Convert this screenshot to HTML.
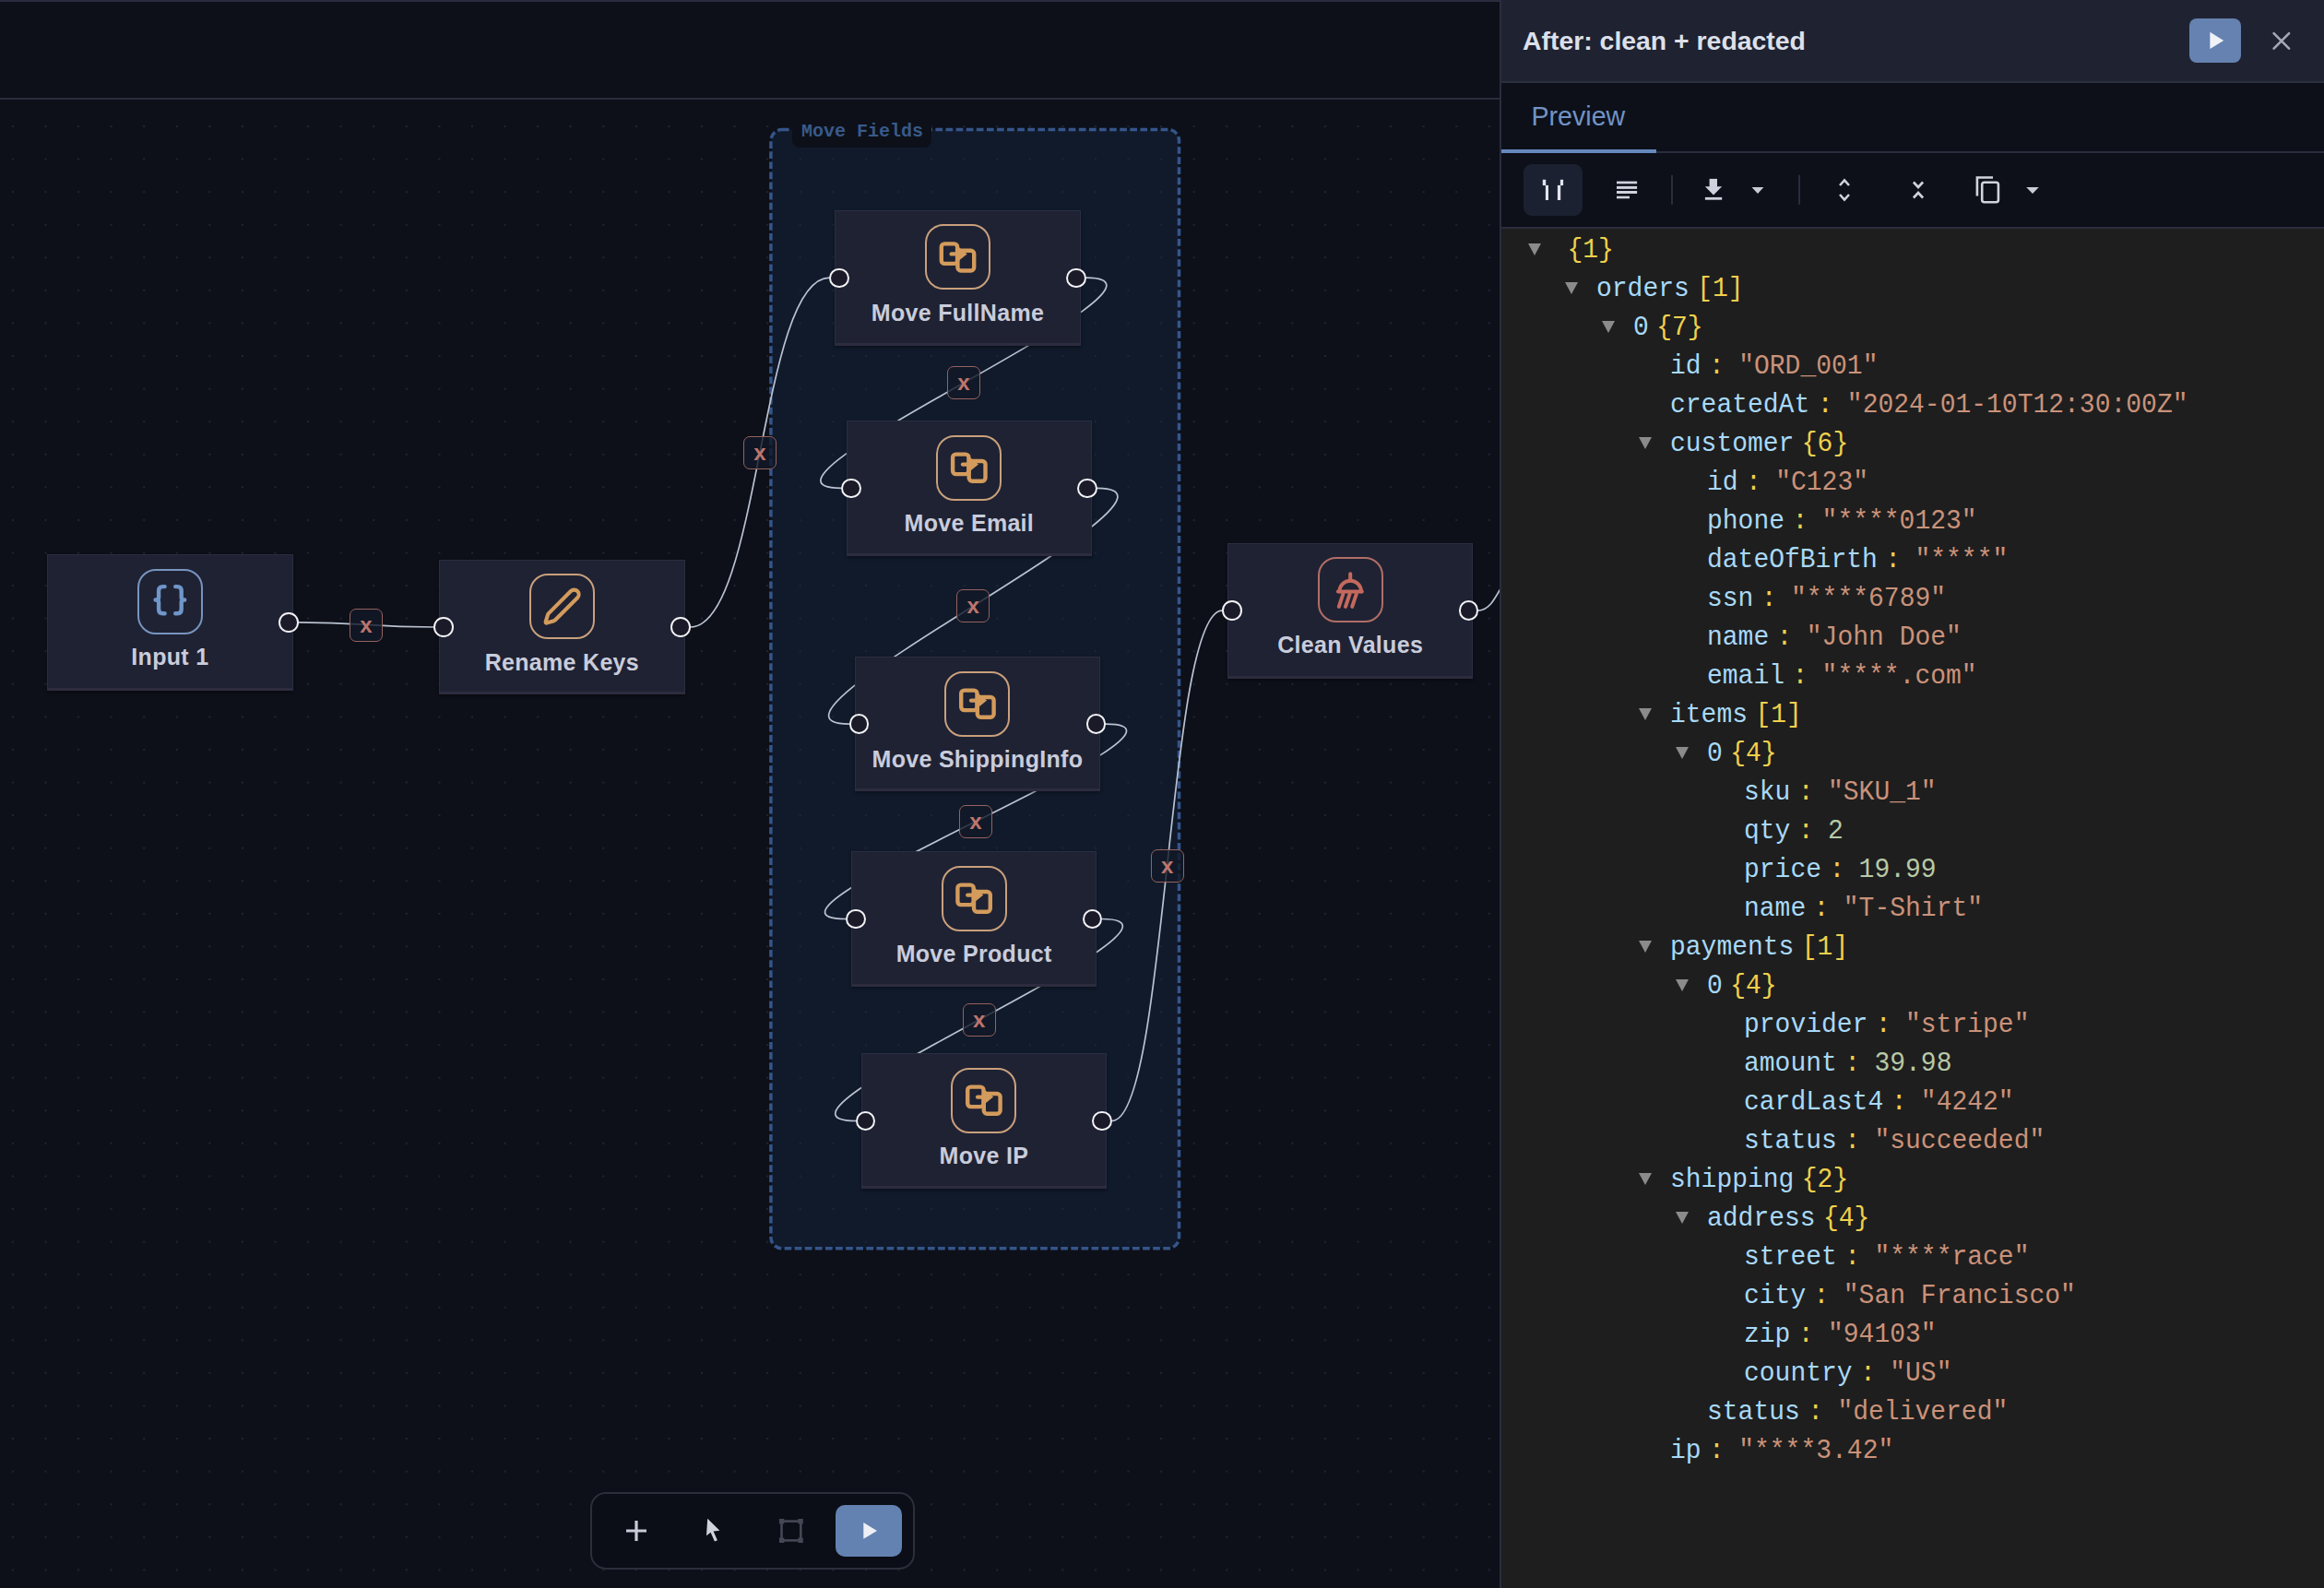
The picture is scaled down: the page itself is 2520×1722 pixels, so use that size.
<!DOCTYPE html>
<html><head><meta charset="utf-8"><style>
*{box-sizing:border-box}
html,body{margin:0;padding:0;width:2520px;height:1722px;overflow:hidden;background:#0d1019;font-family:"Liberation Sans",sans-serif}
.abs{position:absolute}
.node{position:absolute;background:#1f2233;border:1.5px solid #2a2e40;border-bottom:3px solid #2d2c3f;box-shadow:0 2px 3px rgba(0,0,0,0.35)}
.ibox{position:absolute;width:71px;height:71px;border:2px solid;border-radius:20px}
.nlabel{position:absolute;left:0;right:0;text-align:center;font-weight:bold;font-size:25px;letter-spacing:0.3px;color:#c9ccdb;white-space:nowrap;line-height:30px}
.handle{position:absolute;width:21.5px;height:21.5px;border-radius:50%;background:#1b1a29;border:2.4px solid #f2f2f5}
.elab{position:absolute;width:36px;height:36px;border:1.9px solid #95625f;border-radius:7px;background:rgba(17,24,39,0.8);color:#bd756d;font-weight:bold;font-size:24px;line-height:33.5px;text-align:center}
.row{position:absolute;height:42px;line-height:42px;font-family:"Liberation Mono",monospace;font-size:28px;white-space:pre;transform:scaleY(1.04);transform-origin:0 28px}
.k{color:#a8d9f8}
.c{color:#f0d04c;margin:0 15.4px 0 8.4px}
.s{color:#ca927a}
.n{color:#b7c9a6}
.b{color:#f0d04c;margin-left:8.4px}
.tri{position:absolute;width:0;height:0;border-left:7.1px solid transparent;border-right:7.1px solid transparent;border-top:13.7px solid #8b8b8b}
</style></head><body>

<div class="abs" style="left:0;top:0;width:1626px;height:2px;background:#2a2d3d"></div>
<div class="abs" style="left:0;top:106px;width:1626px;height:2px;background:#2a2d3d"></div>
<svg class="abs" style="left:0;top:0" width="1626" height="1722" viewBox="0 0 1626 1722">
<defs><pattern id="dots" patternUnits="userSpaceOnUse" x="-3.888" y="119.212" width="35.576" height="35.576"><circle cx="17.788" cy="17.788" r="1.1" fill="#252935"/></pattern></defs>
<rect x="0" y="108" width="1626" height="1614" fill="url(#dots)"/>
<rect x="835.9" y="140.5" width="442.6" height="1213.2" rx="12" ry="12" fill="rgba(22,40,70,0.42)" stroke="#35558a" stroke-width="3.5" stroke-dasharray="7.7 3.4"/>
<path d="M323.4,674.9 C396.9,674.9 396.9,680.0 470.4,680.0" fill="none" stroke="#bac2d1" stroke-width="1.7"/>
<path d="M748.5,680.0 C824.0,680.0 824.0,301.2 899.4,301.2" fill="none" stroke="#bac2d1" stroke-width="1.7"/>
<path d="M1177.6,301.2 C1313.4,301.2 776.3,529.3 912.1,529.3" fill="none" stroke="#bac2d1" stroke-width="1.7"/>
<path d="M1189.6,529.3 C1326.2,529.3 784.3,785.1 920.9,785.1" fill="none" stroke="#bac2d1" stroke-width="1.7"/>
<path d="M1198.9,785.1 C1338.8,785.1 777.2,996.5 917.1,996.5" fill="none" stroke="#bac2d1" stroke-width="1.7"/>
<path d="M1195.1,996.5 C1331.3,996.5 791.8,1215.5 928.0,1215.5" fill="none" stroke="#bac2d1" stroke-width="1.7"/>
<path d="M1205.8,1215.5 C1265.6,1215.5 1265.6,662.1 1325.3,662.1" fill="none" stroke="#bac2d1" stroke-width="1.7"/>
<path d="M1603.0,662.1 C1614.4,661.6 1620,651.15 1630,633.15" fill="none" stroke="#bac2d1" stroke-width="1.7"/>
</svg>
<div class="abs" style="left:858.6px;top:121px;width:151px;height:39px;background:#0d1019;border-radius:8px"></div>
<div class="abs" style="left:869px;top:128.5px;font:bold 20px 'Liberation Mono',monospace;color:#385a8a;line-height:28px;white-space:pre">Move Fields</div>
<div class="node" style="left:51.2px;top:601.0px;width:266.4px;height:147.8px"></div>
<div class="ibox" style="left:148.9px;top:616.6px;border-color:#7794bf"></div>
<svg class="abs" style="left:0;top:0;overflow:visible" width="1" height="1"><g fill="none" stroke="#6f95c9" stroke-width="4.4" stroke-linecap="round" stroke-linejoin="round" transform="translate(0.0,-0.4)"><path d="M178.6,636.5 L176.6,636.5 Q172.1,636.5 172.1,641 L172.1,648.4 Q172.1,650.9 168.6,650.9 Q172.1,650.9 172.1,653.4 L172.1,661.1 Q172.1,665.6 176.6,665.6 L178.6,665.6"/><path d="M190.2,636.5 L192.2,636.5 Q196.7,636.5 196.7,641 L196.7,648.4 Q196.7,650.9 200.2,650.9 Q196.7,650.9 196.7,653.4 L196.7,661.1 Q196.7,665.6 192.2,665.6 L190.2,665.6"/></g></svg>
<div class="nlabel" style="left:51.2px;width:266.4px;top:696.9px">Input 1</div>
<div class="node" style="left:476.2px;top:606.6px;width:266.4px;height:146.9px"></div>
<div class="ibox" style="left:573.9px;top:622.2px;border-color:#c9a07c"></div>
<svg class="abs" style="left:587.8px;top:636.1px" width="43.2" height="43.2" viewBox="0 0 24 24" fill="none" stroke="#d39b5c" stroke-width="2.3" stroke-linecap="round" stroke-linejoin="round"><path d="M21.174 6.812a1 1 0 0 0-3.986-3.987L3.842 16.174a2 2 0 0 0-.5.83l-1.321 4.352a.5.5 0 0 0 .623.622l4.353-1.32a2 2 0 0 0 .83-.497z"/></svg>
<div class="nlabel" style="left:476.2px;width:266.4px;top:702.5px">Rename Keys</div>
<div class="node" style="left:905.3px;top:227.8px;width:266.4px;height:146.8px"></div>
<div class="ibox" style="left:1003.0px;top:243.4px;border-color:#c9a07c"></div>
<svg class="abs" style="left:0;top:0;overflow:visible" width="1" height="1"><g fill="none" stroke="#d39b5c" stroke-width="4.4" stroke-linejoin="round" stroke-linecap="round"><rect x="1020.8" y="264.4" width="17.3" height="21.5" rx="3.5"/><rect x="1038.4" y="271.8" width="17.8" height="21.7" rx="3.5"/><path d="M1031.7,275.4 L1039.1,275.4"/></g><path d="M1037.6,266.3 L1048.7,275.4 L1037.6,284.3 Z" fill="#d39b5c"/></svg>
<div class="nlabel" style="left:905.3px;width:266.4px;top:323.7px">Move FullName</div>
<div class="node" style="left:918.0px;top:456.0px;width:265.7px;height:146.6px"></div>
<div class="ibox" style="left:1015.3px;top:471.6px;border-color:#c9a07c"></div>
<svg class="abs" style="left:0;top:0;overflow:visible" width="1" height="1"><g fill="none" stroke="#d39b5c" stroke-width="4.4" stroke-linejoin="round" stroke-linecap="round"><rect x="1033.1" y="492.6" width="17.3" height="21.5" rx="3.5"/><rect x="1050.7" y="500.0" width="17.8" height="21.7" rx="3.5"/><path d="M1044.0,503.6 L1051.4,503.6"/></g><path d="M1049.9,494.5 L1061.0,503.6 L1049.9,512.5 Z" fill="#d39b5c"/></svg>
<div class="nlabel" style="left:918.0px;width:265.7px;top:551.9px">Move Email</div>
<div class="node" style="left:926.8px;top:712.0px;width:266.2px;height:146.3px"></div>
<div class="ibox" style="left:1024.4px;top:727.6px;border-color:#c9a07c"></div>
<svg class="abs" style="left:0;top:0;overflow:visible" width="1" height="1"><g fill="none" stroke="#d39b5c" stroke-width="4.4" stroke-linejoin="round" stroke-linecap="round"><rect x="1042.2" y="748.6" width="17.3" height="21.5" rx="3.5"/><rect x="1059.8" y="756.0" width="17.8" height="21.7" rx="3.5"/><path d="M1053.1,759.6 L1060.5,759.6"/></g><path d="M1059.0,750.5 L1070.1,759.6 L1059.0,768.5 Z" fill="#d39b5c"/></svg>
<div class="nlabel" style="left:926.8px;width:266.2px;top:807.9px">Move ShippingInfo</div>
<div class="node" style="left:923.0px;top:923.0px;width:266.2px;height:147.0px"></div>
<div class="ibox" style="left:1020.6px;top:938.6px;border-color:#c9a07c"></div>
<svg class="abs" style="left:0;top:0;overflow:visible" width="1" height="1"><g fill="none" stroke="#d39b5c" stroke-width="4.4" stroke-linejoin="round" stroke-linecap="round"><rect x="1038.4" y="959.6" width="17.3" height="21.5" rx="3.5"/><rect x="1056.0" y="967.0" width="17.8" height="21.7" rx="3.5"/><path d="M1049.3,970.6 L1056.7,970.6"/></g><path d="M1055.2,961.5 L1066.3,970.6 L1055.2,979.5 Z" fill="#d39b5c"/></svg>
<div class="nlabel" style="left:923.0px;width:266.2px;top:1018.9px">Move Product</div>
<div class="node" style="left:933.9px;top:1142.0px;width:266.0px;height:147.0px"></div>
<div class="ibox" style="left:1031.4px;top:1157.6px;border-color:#c9a07c"></div>
<svg class="abs" style="left:0;top:0;overflow:visible" width="1" height="1"><g fill="none" stroke="#d39b5c" stroke-width="4.4" stroke-linejoin="round" stroke-linecap="round"><rect x="1049.2" y="1178.6" width="17.3" height="21.5" rx="3.5"/><rect x="1066.8" y="1186.0" width="17.8" height="21.7" rx="3.5"/><path d="M1060.1,1189.6 L1067.5,1189.6"/></g><path d="M1066.0,1180.5 L1077.1,1189.6 L1066.0,1198.5 Z" fill="#d39b5c"/></svg>
<div class="nlabel" style="left:933.9px;width:266.0px;top:1237.9px">Move IP</div>
<div class="node" style="left:1331.2px;top:588.5px;width:266.0px;height:147.3px"></div>
<div class="ibox" style="left:1428.7px;top:604.1px;border-color:#b06e66"></div>
<svg class="abs" style="left:0;top:0;overflow:visible" width="1" height="1"><g fill="none" stroke="#c4695d" stroke-width="4" stroke-linecap="round" stroke-linejoin="round"><path d="M1464.2,622.3 L1464.2,628.2"/><path d="M1452.4,641.5 A11.8 11.8 0 0 1 1476.0,641.5"/><path d="M1450.9,641.5 L1476.8,641.5"/><path d="M1456.4,644.2 L1451.8,657.9 M1463.6,644.2 L1459.0,657.9 M1470.8,644.2 L1466.2,657.9"/></g></svg>
<div class="nlabel" style="left:1331.2px;width:266.0px;top:684.4px">Clean Values</div>
<div class="handle" style="left:302.1px;top:664.1px"></div>
<div class="handle" style="left:470.2px;top:669.3px"></div>
<div class="handle" style="left:727.1px;top:669.3px"></div>
<div class="handle" style="left:899.3px;top:290.5px"></div>
<div class="handle" style="left:1156.2px;top:290.5px"></div>
<div class="handle" style="left:912.0px;top:518.5px"></div>
<div class="handle" style="left:1168.2px;top:518.5px"></div>
<div class="handle" style="left:920.8px;top:774.4px"></div>
<div class="handle" style="left:1177.5px;top:774.4px"></div>
<div class="handle" style="left:917.0px;top:985.8px"></div>
<div class="handle" style="left:1173.7px;top:985.8px"></div>
<div class="handle" style="left:927.9px;top:1204.8px"></div>
<div class="handle" style="left:1184.4px;top:1204.8px"></div>
<div class="handle" style="left:1325.2px;top:651.4px"></div>
<div class="handle" style="left:1581.7px;top:651.4px"></div>
<div class="elab" style="left:378.9px;top:659.5px">x</div>
<div class="elab" style="left:806.0px;top:472.6px">x</div>
<div class="elab" style="left:1026.9px;top:397.2px">x</div>
<div class="elab" style="left:1037.2px;top:639.2px">x</div>
<div class="elab" style="left:1040.0px;top:872.8px">x</div>
<div class="elab" style="left:1043.6px;top:1088.0px">x</div>
<div class="elab" style="left:1247.6px;top:920.8px">x</div>
<div class="abs" style="left:639.8px;top:1617.8px;width:351.8px;height:84px;border:2.2px solid #2b2e3b;border-radius:17px;background:#0b0e16"></div>
<svg class="abs" style="left:0;top:0;overflow:visible" width="1" height="1"><path d="M690,1649 L690,1671 M679,1660 L701,1660" stroke="#c9cbd6" stroke-width="3.2" stroke-linecap="butt"/><path d="M767.2,1646.7 L780.4,1659.7 L773.6,1660.6 L777.9,1670.3 L774.9,1671.6 L770.6,1661.7 L766,1665.2 Z" fill="#d0d2dc"/><g stroke="#444854" stroke-width="2.6" fill="none"><rect x="847.5" y="1649.6" width="20.8" height="20.8"/></g><g fill="#444854"><rect x="844.9" y="1647" width="5.4" height="5.4"/><rect x="865.4" y="1647" width="5.4" height="5.4"/><rect x="844.9" y="1667.6" width="5.4" height="5.4"/><rect x="865.4" y="1667.6" width="5.4" height="5.4"/></g></svg>
<div class="abs" style="left:906.1px;top:1631.9px;width:71.9px;height:55.9px;background:#6382b1;border-radius:10px"></div>
<svg class="abs" style="left:0;top:0;overflow:visible" width="1" height="1"><path d="M936.3,1651 L951,1659.9 L936.3,1668.8 Z" fill="#eef0f6"/></svg>
<div class="abs" style="left:1626px;top:0;width:2px;height:1722px;background:#2a2d3d"></div>
<div class="abs" style="left:1628px;top:0;width:892px;height:88px;background:#1f2231"></div>
<div class="abs" style="left:1628px;top:88px;width:892px;height:2px;background:#2b2e3f"></div>
<div class="abs" style="left:1628px;top:90px;width:892px;height:156px;background:#0d1019"></div>
<div class="abs" style="left:1628px;top:164px;width:892px;height:2px;background:#2a2d3d"></div>
<div class="abs" style="left:1628px;top:162px;width:168px;height:4px;background:#6689bd"></div>
<div class="abs" style="left:1628px;top:246px;width:892px;height:2px;background:#2a2d3d"></div>
<div class="abs" style="left:1628px;top:248px;width:892px;height:1474px;background:#1e1e1e"></div>
<div class="abs" style="left:1651px;top:26.8px;font-weight:bold;font-size:28.4px;line-height:34px;color:#dde0ea;white-space:nowrap">After: clean + redacted</div>
<div class="abs" style="left:2374px;top:19.9px;width:56px;height:48px;background:#6582b0;border-radius:8px"></div>
<svg class="abs" style="left:0;top:0;overflow:visible" width="1" height="1"><path d="M2396.4,34.7 L2411.2,43.9 L2396.4,53.1 Z" fill="#f0f2f8"/><path d="M2465.6,36.1 L2482.1,52.6 M2482.1,36.1 L2465.6,52.6" stroke="#a4a9b8" stroke-width="2.6" stroke-linecap="round"/></svg>
<div class="abs" style="left:1660.5px;top:109.4px;font-size:28.6px;line-height:34px;color:#7193c6;white-space:nowrap">Preview</div>
<div class="abs" style="left:1652.3px;top:178px;width:63.6px;height:56px;background:#1b2130;border-radius:9px"></div>
<svg class="abs" style="left:0;top:0;overflow:visible" width="1" height="1"><g fill="#e2e5ee"><rect x="1672.8" y="194.8" width="3.4" height="6.3"/><rect x="1675.9" y="200.9" width="3.1" height="16.1"/><rect x="1691.9" y="194.8" width="3.2" height="6.3"/><rect x="1688.9" y="200.9" width="3.3" height="16.1"/></g><g fill="#d0d3dd"><rect x="1753" y="196.6" width="22.1" height="2.7"/><rect x="1753" y="201.9" width="22.1" height="3"/><rect x="1753" y="207" width="22.1" height="3"/><rect x="1753" y="212.7" width="14" height="2.6"/></g><rect x="1812" y="189.8" width="2" height="32" fill="#2a2d3a"/><rect x="1950" y="189.8" width="2" height="32" fill="#2a2d3a"/><g fill="#d0d3dd"><rect x="1853.6" y="193.9" width="8.4" height="9"/><path d="M1848.9,202.3 L1867.2,202.3 L1858,211.5 Z"/><rect x="1848.9" y="213.9" width="18.3" height="2.8"/></g><path d="M1899.5,202.9 L1912.4,202.9 L1906,210 Z" fill="#c9ccd6"/><path d="M2197.2,202.9 L2210.8,202.9 L2204,210 Z" fill="#c9ccd6"/><g fill="none" stroke="#d0d3dd" stroke-width="2.6" stroke-linecap="butt" stroke-linejoin="miter"><path d="M1995,201 L2000,195.5 L2005,201"/><path d="M1995,211 L2000,216.5 L2005,211"/><path d="M2074.9,197.5 L2080,203 L2085.1,197.5"/><path d="M2074.9,214.5 L2080,209 L2085.1,214.5"/><path d="M2143.9,212.6 L2143.9,192.5 L2161,192.5"/><rect x="2149.2" y="197.8" width="17.7" height="21.5" rx="2.5"/></g></svg>
<div class="tri" style="left:1656.8px;top:264.4px"></div>
<div class="row" style="left:1691.0px;top:251.2px"><span class="b">{1}</span></div>
<div class="tri" style="left:1696.8px;top:306.4px"></div>
<div class="row" style="left:1731.0px;top:293.2px"><span class="k">orders</span><span class="b">[1]</span></div>
<div class="tri" style="left:1736.8px;top:348.4px"></div>
<div class="row" style="left:1771.0px;top:335.2px"><span class="k">0</span><span class="b">{7}</span></div>
<div class="row" style="left:1811.0px;top:377.2px"><span class="k">id</span><span class="c">:</span><span class="s">"ORD_001"</span></div>
<div class="row" style="left:1811.0px;top:419.2px"><span class="k">createdAt</span><span class="c">:</span><span class="s">"2024-01-10T12:30:00Z"</span></div>
<div class="tri" style="left:1776.8px;top:474.4px"></div>
<div class="row" style="left:1811.0px;top:461.2px"><span class="k">customer</span><span class="b">{6}</span></div>
<div class="row" style="left:1851.0px;top:503.2px"><span class="k">id</span><span class="c">:</span><span class="s">"C123"</span></div>
<div class="row" style="left:1851.0px;top:545.2px"><span class="k">phone</span><span class="c">:</span><span class="s">"****0123"</span></div>
<div class="row" style="left:1851.0px;top:587.2px"><span class="k">dateOfBirth</span><span class="c">:</span><span class="s">"****"</span></div>
<div class="row" style="left:1851.0px;top:629.2px"><span class="k">ssn</span><span class="c">:</span><span class="s">"****6789"</span></div>
<div class="row" style="left:1851.0px;top:671.2px"><span class="k">name</span><span class="c">:</span><span class="s">"John Doe"</span></div>
<div class="row" style="left:1851.0px;top:713.2px"><span class="k">email</span><span class="c">:</span><span class="s">"****.com"</span></div>
<div class="tri" style="left:1776.8px;top:768.4px"></div>
<div class="row" style="left:1811.0px;top:755.2px"><span class="k">items</span><span class="b">[1]</span></div>
<div class="tri" style="left:1816.8px;top:810.4px"></div>
<div class="row" style="left:1851.0px;top:797.2px"><span class="k">0</span><span class="b">{4}</span></div>
<div class="row" style="left:1891.0px;top:839.2px"><span class="k">sku</span><span class="c">:</span><span class="s">"SKU_1"</span></div>
<div class="row" style="left:1891.0px;top:881.2px"><span class="k">qty</span><span class="c">:</span><span class="n">2</span></div>
<div class="row" style="left:1891.0px;top:923.2px"><span class="k">price</span><span class="c">:</span><span class="n">19.99</span></div>
<div class="row" style="left:1891.0px;top:965.2px"><span class="k">name</span><span class="c">:</span><span class="s">"T-Shirt"</span></div>
<div class="tri" style="left:1776.8px;top:1020.4px"></div>
<div class="row" style="left:1811.0px;top:1007.2px"><span class="k">payments</span><span class="b">[1]</span></div>
<div class="tri" style="left:1816.8px;top:1062.4px"></div>
<div class="row" style="left:1851.0px;top:1049.2px"><span class="k">0</span><span class="b">{4}</span></div>
<div class="row" style="left:1891.0px;top:1091.2px"><span class="k">provider</span><span class="c">:</span><span class="s">"stripe"</span></div>
<div class="row" style="left:1891.0px;top:1133.2px"><span class="k">amount</span><span class="c">:</span><span class="n">39.98</span></div>
<div class="row" style="left:1891.0px;top:1175.2px"><span class="k">cardLast4</span><span class="c">:</span><span class="s">"4242"</span></div>
<div class="row" style="left:1891.0px;top:1217.2px"><span class="k">status</span><span class="c">:</span><span class="s">"succeeded"</span></div>
<div class="tri" style="left:1776.8px;top:1272.4px"></div>
<div class="row" style="left:1811.0px;top:1259.2px"><span class="k">shipping</span><span class="b">{2}</span></div>
<div class="tri" style="left:1816.8px;top:1314.4px"></div>
<div class="row" style="left:1851.0px;top:1301.2px"><span class="k">address</span><span class="b">{4}</span></div>
<div class="row" style="left:1891.0px;top:1343.2px"><span class="k">street</span><span class="c">:</span><span class="s">"****race"</span></div>
<div class="row" style="left:1891.0px;top:1385.2px"><span class="k">city</span><span class="c">:</span><span class="s">"San Francisco"</span></div>
<div class="row" style="left:1891.0px;top:1427.2px"><span class="k">zip</span><span class="c">:</span><span class="s">"94103"</span></div>
<div class="row" style="left:1891.0px;top:1469.2px"><span class="k">country</span><span class="c">:</span><span class="s">"US"</span></div>
<div class="row" style="left:1851.0px;top:1511.2px"><span class="k">status</span><span class="c">:</span><span class="s">"delivered"</span></div>
<div class="row" style="left:1811.0px;top:1553.2px"><span class="k">ip</span><span class="c">:</span><span class="s">"****3.42"</span></div>
</body></html>
